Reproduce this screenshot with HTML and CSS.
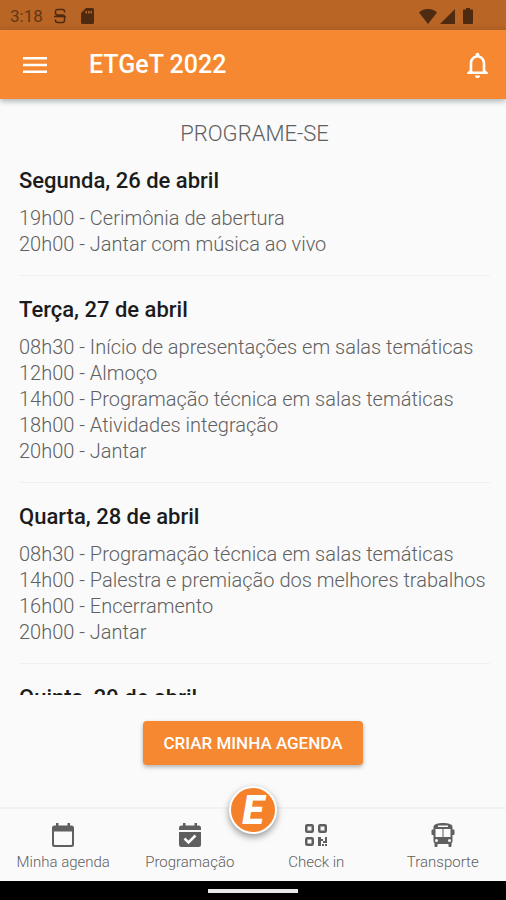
FILE: index.html
```html
<!DOCTYPE html>
<html lang="pt-BR">
<head>
<meta charset="utf-8">
<meta name="viewport" content="width=device-width, initial-scale=1">
<title>ETGeT 2022</title>
<link rel="stylesheet" href="styles.css">
</head>
<body>
<div class="app">
  <div class="status">
    <span class="clock">3:18</span>
    <svg class="status-s" viewBox="0 0 12 16" aria-hidden="true"><path d="M10.500 4.500V3.500a2 2 0 0 0-2-2h-5a2 2 0 0 0-2 2v1.500a2 2 0 0 0 2 2h5a2 2 0 0 1 2 2v3.500a2 2 0 0 1-2 2h-5a2 2 0 0 1-2-2v-1M0 8.500h12" fill="none" stroke="currentColor" stroke-width="1.500"/></svg>
    <svg class="status-sd" viewBox="0 0 13 16" aria-hidden="true"><path fill="currentColor" fill-rule="evenodd" d="M5 0h6.500A1.500 1.500 0 0 1 13 1.500v13a1.500 1.500 0 0 1-1.500 1.500h-10A1.500 1.500 0 0 1 0 14.500V5zM4.500 3v2.500H6V3zm2.500 0v2.500h1.500V3zm2.500 0v2.500H11V3z"/></svg>
    <div class="signals">
      <svg class="wifi" viewBox="0 0 18 15" aria-hidden="true"><path fill="currentColor" d="M0 3.500C5-1.200 13-1.200 18 3.500L9 15z"/></svg>
      <svg class="cell" viewBox="0 0 15 15" aria-hidden="true"><path fill="currentColor" d="M15 0v15H0z"/></svg>
      <svg class="battery" viewBox="0 0 10 16" aria-hidden="true"><path fill="currentColor" d="M3 0h4v1.500h2a1 1 0 0 1 1 1V15a1 1 0 0 1-1 1H1a1 1 0 0 1-1-1V2.500a1 1 0 0 1 1-1h2z"/></svg>
    </div>
  </div>

  <header class="bar">
    <button class="icon-button" type="button" aria-label="Menu">
      <svg class="menu-icon" viewBox="0 0 24 16" aria-hidden="true"><path d="M0 1.250h24M0 8h24M0 14.750h24" stroke="currentColor" stroke-width="2.500"/></svg>
    </button>
    <h1 class="bar-title">ETGeT 2022</h1>
    <button class="icon-button" type="button" aria-label="Notificações">
      <svg class="bell-icon" viewBox="4 2 16 20" aria-hidden="true"><path fill="currentColor" d="M12 22c1.100 0 2-.9 2-2h-4c0 1.100.9 2 2 2zm6-6v-5c0-3.070-1.630-5.640-4.500-6.320V4c0-.83-.67-1.500-1.500-1.500s-1.500.67-1.500 1.500v.68C7.640 5.360 6 7.920 6 11v5l-2 2v1h16v-1zm-2 1H8v-6c0-2.480 1.510-4.500 4-4.500s4 2.020 4 4.500z"/></svg>
    </button>
  </header>

  <main class="schedule">
    <h2 class="schedule-title">PROGRAME-SE</h2>
    <section class="day">
      <h3 class="day-title">Segunda, 26 de abril</h3>
      <ul class="events">
        <li>19h00 - Cerimônia de abertura</li>
        <li>20h00 - Jantar com música ao vivo</li>
      </ul>
    </section>
    <section class="day">
      <h3 class="day-title">Terça, 27 de abril</h3>
      <ul class="events">
        <li>08h30 - Início de apresentações em salas temáticas</li>
        <li>12h00 - Almoço</li>
        <li>14h00 - Programação técnica em salas temáticas</li>
        <li>18h00 - Atividades integração</li>
        <li>20h00 - Jantar</li>
      </ul>
    </section>
    <section class="day">
      <h3 class="day-title">Quarta, 28 de abril</h3>
      <ul class="events">
        <li>08h30 - Programação técnica em salas temáticas</li>
        <li>14h00 - Palestra e premiação dos melhores trabalhos</li>
        <li>16h00 - Encerramento</li>
        <li>20h00 - Jantar</li>
      </ul>
    </section>
    <section class="day">
      <h3 class="day-title">Quinta, 29 de abril</h3>
    </section>
  </main>

  <div class="action">
    <button class="create" type="button">CRIAR MINHA AGENDA</button>
  </div>

  <nav class="tabs">
    <a class="tab" href="#agenda">
      <svg class="tab-icon" viewBox="0 0 24 26" aria-hidden="true"><path fill="currentColor" fill-rule="evenodd" d="M5 1h2.500v2.500h9V1H19v2.500h1.500A2.500 2.500 0 0 1 23 6v16.500a2.500 2.500 0 0 1-2.500 2.500h-17A2.500 2.500 0 0 1 1 22.500V6a2.500 2.500 0 0 1 2.500-2.500H5zM3 9.500v12.500a1 1 0 0 0 1 1h16a1 1 0 0 0 1-1V9.500z"/></svg>
      <span>Minha agenda</span>
    </a>
    <a class="tab" href="#programacao">
      <svg class="tab-icon" viewBox="0 0 24 26" aria-hidden="true"><path fill="currentColor" d="M5 1h2.500v2.500h9V1H19v2.500h1.500A2.500 2.500 0 0 1 23 6v2H1V6a2.500 2.500 0 0 1 2.500-2.500H5z"/><path fill="currentColor" d="M1 10h22v12.500a2.500 2.500 0 0 1-2.500 2.500h-17A2.500 2.500 0 0 1 1 22.500z"/><path d="M6.500 16.500l4 4 7-7" fill="none" stroke="#fafafa" stroke-width="2.500"/></svg>
      <span>Programação</span>
    </a>
    <a class="tab" href="#checkin">
      <svg class="tab-icon" viewBox="0 0 24 26" aria-hidden="true"><g fill="none" stroke="currentColor" stroke-width="2.500"><rect x="2.250" y="3.250" width="6.500" height="6.500" rx="1"/><rect x="15.250" y="3.250" width="6.500" height="6.500" rx="1"/><rect x="2.250" y="16.250" width="6.500" height="6.500" rx="1"/></g><path fill="currentColor" d="M14 15h3v2h2v2h2v-4h2v6h-4v-2h-2v5h-3zM18 22h2v2h-2zM21 22h2v2h-2z"/></svg>
      <span>Check in</span>
    </a>
    <a class="tab" href="#transporte">
      <svg class="tab-icon" viewBox="0 0 24 26" aria-hidden="true"><path fill="currentColor" fill-rule="evenodd" d="M12 1c5 0 9.500 1 9.500 4v2.500h1a1 1 0 0 1 1 1v3.500a1 1 0 0 1-1 1h-1v6a2 2 0 0 1-1 2v3a1 1 0 0 1-1 1h-1a1 1 0 0 1-1-1v-2h-11v2a1 1 0 0 1-1 1h-1a1 1 0 0 1-1-1v-3a2 2 0 0 1-1-2v-6h-1a1 1 0 0 1-1-1V8.500a1 1 0 0 1 1-1h1V5c0-3 4.500-4 9.500-4zM7 3.500V5h10V3.500zM4.500 7v8h7V7zm8 0v8h7V7z"/><circle cx="5.500" cy="18.500" r="1.500" fill="#fafafa"/><circle cx="18.500" cy="18.500" r="1.500" fill="#fafafa"/></svg>
      <span>Transporte</span>
    </a>
    <a class="badge" href="#inicio" aria-label="Início">E</a>
  </nav>
  <div class="system"><div class="handle"></div></div>
</div>
</body>
</html>
```
FILE: styles.css
```css
* { box-sizing: border-box; }

body {
  margin: 0;
  background: #fafafa;
  font-family: Roboto, "Liberation Sans", sans-serif;
  color: #757575;
}

h1, h2, h3, ul { margin: 0; padding: 0; }

button { border: 0; padding: 0; font-family: inherit; color: #fff; cursor: pointer; }

svg { display: block; }

.app { display: flex; flex-direction: column; height: 100vh; }

.status {
  display: flex;
  align-items: center;
  flex: none;
  height: 30px;
  padding: 2px 33px 0 10px;
  background: #b86526;
  color: #4d2a10;
}
.clock { margin-right: 11px; font-size: 17px; line-height: 20px; color: #633615; }
.status-s { width: 12px; height: 16px; margin-right: 15px; }
.status-sd { width: 13px; height: 16px; }
.signals { display: flex; align-items: center; margin-left: auto; }
.wifi { width: 18px; height: 15px; margin-right: 3px; }
.cell { width: 15px; height: 15px; margin-right: 8px; }
.battery { width: 10px; height: 16px; }

.bar {
  position: relative;
  display: flex;
  align-items: center;
  flex: none;
  height: 69px;
  padding: 0 18px 0 23px;
  background: #f68831;
  color: #fff;
  box-shadow: 0 2px 6px rgba(0, 30, 30, 0.35);
}
.icon-button { background: none; }
.menu-icon { width: 24px; height: 16px; }
.bell-icon { width: 21px; height: 26px; }
.bar-title { flex: 1; margin-left: 42px; font-size: 25px; line-height: 32px; font-weight: 500; }

.schedule {
  flex: 1;
  min-height: 0;
  padding: 19px 16px 0 19px;
  overflow-y: auto;
  scrollbar-width: none;
}
.schedule-title { margin-bottom: 18px; font-size: 22px; line-height: 32px; font-weight: 300; color: #606060; text-align: center; }
.day { margin-bottom: 21px; padding-bottom: 18px; border-bottom: 1px solid #f0f0f0; }
.day-title { margin-bottom: 11px; font-size: 22px; line-height: 26px; font-weight: 500; color: #1c1c1c; }
.events { list-style: none; font-size: 20px; line-height: 26px; font-weight: 300; color: #606060; }

.action { display: flex; justify-content: center; flex: none; padding: 26px 16px 42px; }
.create {
  padding: 0 20px;
  border-radius: 4px;
  background: #f68831;
  font-size: 17px;
  line-height: 44px;
  font-weight: 500;
  box-shadow: 0 2px 4px rgba(0, 0, 0, 0.3);
}

.tabs {
  position: relative;
  display: grid;
  grid-template-columns: repeat(4, 1fr);
  flex: none;
  height: 74px;
  border-top: 2px solid #f2f2f2;
}
.tab {
  display: flex;
  flex-direction: column;
  align-items: center;
  gap: 4px;
  padding-top: 13px;
  font-size: 15px;
  line-height: 20px;
  font-weight: 300;
  color: #606060;
  text-decoration: none;
}
.tab-icon { width: 24px; height: 26px; color: #5f5f5f; }

.badge {
  position: absolute;
  top: -23px;
  left: 50%;
  width: 48px;
  height: 48px;
  transform: translateX(-50%);
  border: 2px solid #fff;
  border-radius: 50%;
  background: #f5812a;
  box-shadow: 0 3px 7px rgba(0, 0, 0, 0.4);
  color: #fff;
  font-size: 40px;
  line-height: 45px;
  font-weight: 900;
  font-style: italic;
  text-align: center;
  text-decoration: none;
}

.system { display: flex; align-items: center; justify-content: center; flex: none; height: 19px; background: #000; }
.handle { width: 90px; height: 4px; background: #e8e8e8; }
```
